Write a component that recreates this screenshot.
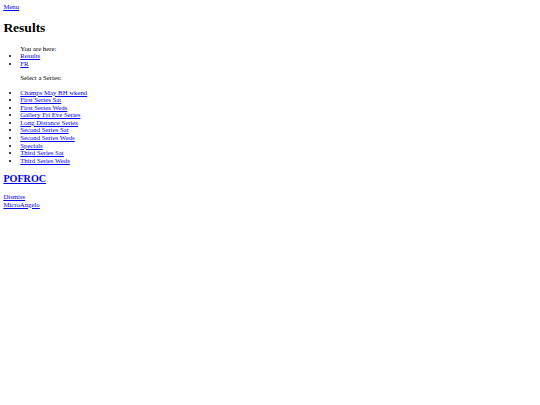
const series = [
  "Champs May BH wkend",
  "First Series Sat",
  "First Series Weds",
  "Gallery Fri Eve Series",
  "Long Distance Series",
  "Second Series Sat",
  "Second Series Weds",
  "Specials",
  "Third Series Sat",
  "Third Series Weds",
];

const link = "text-[#0000EE] underline";

export default function App() {
  return (
    <div className="[zoom:0.421875] m-[8px] font-['Liberation_Serif',serif] text-[16px] leading-[18px] text-black">
      <a href="#" className={`block ${link}`}>
        Menu
      </a>
      <h1 className="my-[21.44px] text-[32px] leading-[37px] font-bold">Results</h1>
      <ul className="my-[16px] list-disc pl-[40px]">
        <li className="list-none">You are here:</li>
        <li>
          <a href="#" className={link}>Results</a>
        </li>
        <li>
          <a href="#" className={link}>FR</a>
        </li>
      </ul>
      <div className="pl-[40px]">
        <p className="my-[16px]">Select a Series:</p>
        <ul className="my-[16px] list-disc">
          {series.map((s) => (
            <li key={s}>
              <a href="#" className={link}>{s}</a>
            </li>
          ))}
        </ul>
      </div>
      <h2 className="my-[19.92px] text-[24px] leading-[28px] font-bold">
        <a href="#" className={link}>POFROC</a>
      </h2>
      <a href="#" className={`block ${link}`}>Dismiss</a>
      <a href="#" className={`block ${link}`}>MicroAngelo</a>
    </div>
  );
}
